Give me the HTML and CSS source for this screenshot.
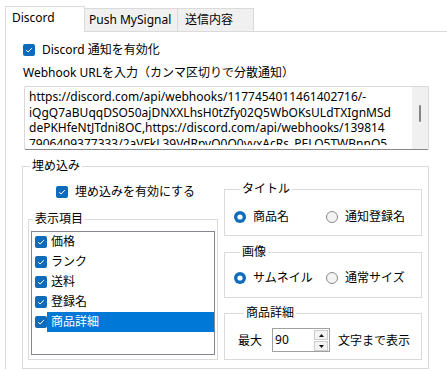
FILE: index.html
```html
<!DOCTYPE html>
<html>
<head>
  <title>Discord 設定</title>
  <link rel="stylesheet" href="styles.css">
</head>
<body>
  <div class="tabs">
    <div class="tab active">Discord</div>
    <div class="tab tab-push">Push MySignal</div>
    <div class="tab tab-send">送信内容</div>
  </div>

  <div class="panel">
    <div class="check-row top-check">
      <svg class="checkbox" width="12" height="12" viewBox="0 0 12 12"><rect width="12" height="12" rx="2" fill="#0f6cbd"/><polyline points="3.2,6.2 5.1,8 8.8,4.2" fill="none" stroke="#fff" stroke-width="1"/></svg>
      <span>Discord 通知を有効化</span>
    </div>

    <div class="url-label">Webhook URLを入力（カンマ区切りで分散通知）</div>

    <div class="textarea">
      <div class="textarea-text">
        https://discord.com/api/webhooks/1177454011461402716/-<br>
        iQgQ7aBUqqDSO50ajDNXXLhsH0tZfy02Q5WbOKsULdTXIgnMSd<br>
        dePKHfeNtJTdni8OC,https://discord.com/api/webhooks/139814<br>
        7906409377333/2aVFkL39VdRpvQ0Q0yyxAcRs_PELQ5TWBnnQ5
      </div>
      <div class="scrollbar"><span class="thumb"></span></div>
    </div>

    <fieldset class="group embed">
      <legend>埋め込み</legend>
      <div class="embed-body">
        <div class="col-left">
          <div class="check-row embed-check">
            <svg class="checkbox" width="12" height="12" viewBox="0 0 12 12"><rect width="12" height="12" rx="2" fill="#0f6cbd"/><polyline points="3.2,6.2 5.1,8 8.8,4.2" fill="none" stroke="#fff" stroke-width="1"/></svg>
            <span>埋め込みを有効にする</span>
          </div>

          <fieldset class="group items">
            <legend>表示項目</legend>
            <ul class="listbox">
              <li><svg class="checkbox" width="12" height="12" viewBox="0 0 12 12"><rect width="12" height="12" rx="2" fill="#0f6cbd"/><polyline points="3.2,6.2 5.1,8 8.8,4.2" fill="none" stroke="#fff" stroke-width="1"/></svg><span class="item-text">価格</span></li>
              <li><svg class="checkbox" width="12" height="12" viewBox="0 0 12 12"><rect width="12" height="12" rx="2" fill="#0f6cbd"/><polyline points="3.2,6.2 5.1,8 8.8,4.2" fill="none" stroke="#fff" stroke-width="1"/></svg><span class="item-text">ランク</span></li>
              <li><svg class="checkbox" width="12" height="12" viewBox="0 0 12 12"><rect width="12" height="12" rx="2" fill="#0f6cbd"/><polyline points="3.2,6.2 5.1,8 8.8,4.2" fill="none" stroke="#fff" stroke-width="1"/></svg><span class="item-text">送料</span></li>
              <li><svg class="checkbox" width="12" height="12" viewBox="0 0 12 12"><rect width="12" height="12" rx="2" fill="#0f6cbd"/><polyline points="3.2,6.2 5.1,8 8.8,4.2" fill="none" stroke="#fff" stroke-width="1"/></svg><span class="item-text">登録名</span></li>
              <li class="selected"><svg class="checkbox" width="12" height="12" viewBox="0 0 12 12"><rect width="12" height="12" rx="2" fill="#0f6cbd"/><polyline points="3.2,6.2 5.1,8 8.8,4.2" fill="none" stroke="#fff" stroke-width="1"/></svg><span class="item-text">商品詳細</span></li>
            </ul>
          </fieldset>
        </div>

        <div class="col-right">
          <fieldset class="group side title-group">
            <legend>タイトル</legend>
            <div class="radio-row">
              <div class="radio">
                <svg width="12" height="12" viewBox="0 0 12 12"><circle cx="6" cy="6" r="6" fill="#0f6cbd"/><circle cx="6" cy="6" r="2.6" fill="#fff"/></svg>
                <span>商品名</span>
              </div>
              <div class="radio">
                <svg width="12" height="12" viewBox="0 0 12 12"><circle cx="6" cy="6" r="5.5" fill="#f3f3f3" stroke="#8a8a8a" stroke-width="1"/></svg>
                <span>通知登録名</span>
              </div>
            </div>
          </fieldset>

          <fieldset class="group side image-group">
            <legend>画像</legend>
            <div class="radio-row">
              <div class="radio">
                <svg width="12" height="12" viewBox="0 0 12 12"><circle cx="6" cy="6" r="6" fill="#0f6cbd"/><circle cx="6" cy="6" r="2.6" fill="#fff"/></svg>
                <span>サムネイル</span>
              </div>
              <div class="radio">
                <svg width="12" height="12" viewBox="0 0 12 12"><circle cx="6" cy="6" r="5.5" fill="#f3f3f3" stroke="#8a8a8a" stroke-width="1"/></svg>
                <span>通常サイズ</span>
              </div>
            </div>
          </fieldset>

          <fieldset class="group side detail-group">
            <legend>商品詳細</legend>
            <div class="detail-row">
              <span>最大</span>
              <div class="spin">
                <span class="spin-value">90</span>
                <div class="spin-buttons">
                  <span class="spin-btn"><svg width="5" height="3" viewBox="0 0 5 3"><polygon points="2.5,0 5,3 0,3" fill="#111"/></svg></span>
                  <span class="spin-btn"><svg width="5" height="3" viewBox="0 0 5 3"><polygon points="0,0 5,0 2.5,3" fill="#111"/></svg></span>
                </div>
              </div>
              <span class="detail-suffix">文字まで表示</span>
            </div>
          </fieldset>
        </div>
      </div>
    </fieldset>
  </div>
</body>
</html>
```

FILE: styles.css
```css
:root {
  --border-light: #dadada;
  --border-dark: #868686;
  --accent: #0f6cbd;
  --select: #0078d7;
  --tab-bg: #f0f0f0;
}

body {
  margin: 0;
  width: 447px;
  height: 371px;
  overflow: hidden;
  background: #ffffff;
  font-family: "Noto Sans", "Noto Sans CJK JP", sans-serif;
  font-size: 12px;
  color: #000;
}

/* Tabs */
.tabs {
  display: flex;
  align-items: flex-end;
  height: 25px;
  padding: 6px 0 0 5px;
}

.tab {
  box-sizing: border-box;
  height: 23px;
  padding: 3px 4px 0 4px;
  line-height: 16px;
  background: var(--tab-bg);
  border: 1px solid var(--border-light);
  border-bottom: none;
  white-space: nowrap;
}

.tab.active {
  position: relative;
  z-index: 1;
  width: 80px;
  height: 26px;
  margin-bottom: -1px;
  padding-left: 6px;
  background: #fff;
}

.tab-push {
  width: 94px;
  margin-left: -1px;
}

.tab-send {
  width: 77px;
  margin-left: -1px;
  padding-left: 7px;
}

/* Panel */
.panel {
  margin-left: 5px;
  padding: 10px 0 0 16px;
  border-top: 1px solid var(--border-light);
  border-left: 1px solid var(--border-light);
}

.check-row {
  display: flex;
  align-items: center;
  gap: 7px;
  height: 16px;
  line-height: 16px;
}

.checkbox {
  flex: none;
  display: block;
}

.top-check {
  margin-left: 1px;
}

.url-label {
  margin: 6px 0 0 1px;
  height: 18px;
  line-height: 18px;
}

.textarea {
  box-sizing: border-box;
  display: flex;
  align-items: flex-start;
  width: 405px;
  height: 64px;
  margin: 4px 0 0 2px;
  border: 1px solid #d9d9d9;
  border-bottom-color: var(--border-dark);
  border-radius: 2px;
}

.textarea-text {
  flex: 1;
  height: 56px;
  padding: 2px 0 0 4px;
  line-height: 15.5px;
  white-space: nowrap;
  overflow: hidden;
}

.scrollbar {
  align-self: stretch;
  width: 16px;
  background: #f0f0f0;
  display: flex;
  justify-content: center;
  padding-top: 18px;
  box-sizing: border-box;
}

.thumb {
  display: block;
  width: 2px;
  height: 17px;
  background: #858585;
  border-radius: 1px;
}

/* Group boxes */
fieldset.group {
  box-sizing: border-box;
  margin: 0;
  padding: 0;
  min-width: 0;
  border: 1px solid var(--border-light);
}

fieldset.group legend {
  padding: 0 2px;
  height: 16px;
  line-height: 16px;
}

fieldset.embed {
  width: 407px;
  margin-top: 8px;
  padding-bottom: 8px;
}

fieldset.embed > legend {
  margin-left: 7px;
}

.embed-body {
  display: flex;
  gap: 6px;
}

.col-left {
  width: 195px;
  padding-left: 5px;
  box-sizing: border-box;
}

.embed-check {
  margin: 10px 0 0 28px;
}

fieldset.items {
  width: 190px;
  margin-top: 11px;
  padding: 4px 2px;
}

fieldset.items > legend {
  margin-left: 2px;
}

.listbox {
  list-style: none;
  margin: 0;
  padding: 0;
  height: 124px;
  box-sizing: border-box;
  border: 1px solid #828790;
}

.listbox li {
  display: flex;
  align-items: center;
  height: 20px;
  padding-left: 3px;
}

.item-text {
  flex: 1;
  height: 20px;
  line-height: 20px;
  padding-left: 4px;
}

.listbox li.selected .item-text {
  background: var(--select);
  color: #fff;
}

.col-right {
  width: 198px;
  margin-top: 7px;
}

fieldset.side > legend {
  margin-left: 6px;
}

fieldset.title-group {
  padding: 12px 0 10px 9px;
}

fieldset.image-group {
  margin-top: 8px;
  padding: 10px 0 11px 9px;
}

fieldset.detail-group {
  margin-top: 7px;
  padding: 7px 0 7px 13px;
}

.radio-row {
  display: flex;
  height: 16px;
  line-height: 16px;
}

.radio {
  display: flex;
  align-items: center;
  gap: 7px;
  width: 92px;
}

.radio svg {
  display: block;
  flex: none;
}

.detail-row {
  display: flex;
  align-items: center;
  height: 24px;
}

.spin {
  box-sizing: border-box;
  display: flex;
  width: 58px;
  height: 24px;
  margin-left: 10px;
  border: 1px solid #a0a0a0;
}

.spin-value {
  flex: 1;
  padding-left: 2px;
  line-height: 22px;
}

.spin-buttons {
  display: flex;
  flex-direction: column;
  gap: 1px;
  margin: 1px 1px 0 0;
}

.spin-btn {
  box-sizing: border-box;
  display: flex;
  align-items: center;
  justify-content: center;
  width: 14px;
  height: 10px;
  background: #f3f3f3;
  border: 1px solid #cdcdcd;
}

.spin-btn svg {
  display: block;
}

.detail-suffix {
  margin-left: 8px;
}
```
